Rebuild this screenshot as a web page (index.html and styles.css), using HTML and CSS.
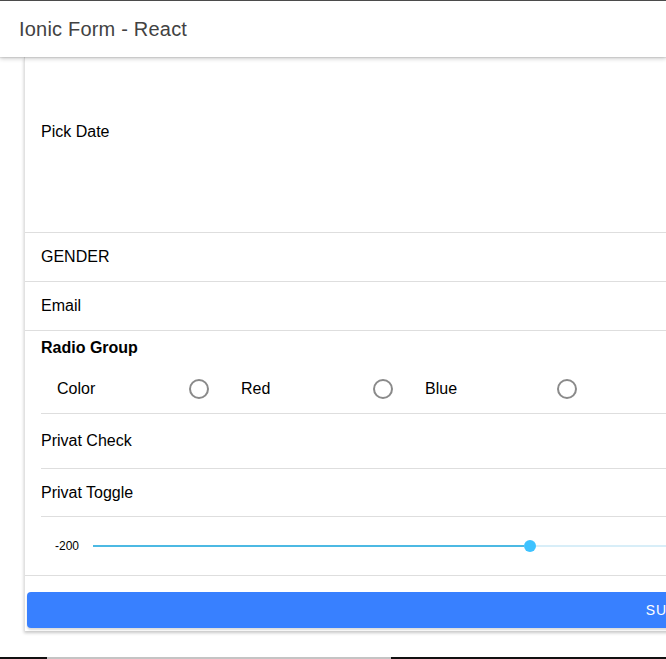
FILE: index.html
```html
<!DOCTYPE html>
<html>
<head>
<meta charset="utf-8">
<link rel="stylesheet" href="styles.css">
</head>
<body>
<div class="topline"></div>
<header class="toolbar"><div class="title">Ionic Form - React</div></header>
<main class="content">
  <div class="card">
    <div class="item item-date"><span>Pick Date</span></div>
    <div class="item item-line"><span>GENDER</span></div>
    <div class="item item-line"><span>Email</span></div>
    <div class="radio-head">Radio Group</div>
    <div class="radio-row">
      <div class="radio-item"><span>Color</span><span class="radio"></span></div>
      <div class="radio-item"><span>Red</span><span class="radio"></span></div>
      <div class="radio-item"><span>Blue</span><span class="radio"></span></div>
    </div>
    <div class="inset">
      <div class="item item-check"><span>Privat Check</span></div>
      <div class="item item-toggle"><span>Privat Toggle</span></div>
      <div class="item item-range">
        <span class="range-label">-200</span>
        <div class="range">
          <div class="range-active"></div>
          <div class="range-knob"></div>
          <div class="range-rest"></div>
        </div>
      </div>
    </div>
    <div class="card-sep"></div>
    <button class="submit">Submit</button>
  </div>
</main>
<div class="bottombar"><span class="seg dark a"></span><span class="seg light"></span><span class="seg dark b"></span></div>
</body>
</html>
```
FILE: styles.css
```css
html, body {
  margin: 0;
  padding: 0;
  background: #fff;
  overflow: hidden;
  width: 666px;
  height: 659px;
  font-family: "Liberation Sans", Arial, sans-serif;
  color: #000;
}
.topline {
  height: 1px;
  background: #4d4d4d;
}
.toolbar {
  height: 56px;
  display: flex;
  align-items: center;
  padding-left: 19px;
  background: #fff;
  box-shadow: 0 2px 4px rgba(0,0,0,0.18), 0 1px 1px rgba(0,0,0,0.08);
  position: relative;
  z-index: 2;
}
.title {
  font-size: 20px;
  color: #424242;
  letter-spacing: 0.2px;
}
.content {
  padding-left: 24px;
}
.card {
  width: 1300px;
  border-left: 1px solid #e2e2e2;
  box-shadow: 0 2px 3px rgba(0,0,0,0.22);
  padding-bottom: 3px;
  background: #fff;
}
.item {
  display: flex;
  align-items: center;
  padding-left: 16px;
  font-size: 16px;
  line-height: 18px;
  box-sizing: border-box;
}
.item-date {
  height: 176px;
  align-items: flex-start;
  padding-top: 66px;
  border-bottom: 1px solid #dedede;
}
.item-line {
  height: 49px;
  border-bottom: 1px solid #dedede;
}
.radio-head {
  font-weight: bold;
  font-size: 16px;
  padding: 8px 0 0 16px;
  height: 26px;
}
.radio-row {
  display: flex;
  margin-left: 16px;
  height: 48px;
  border-bottom: 1px solid #dedede;
  box-sizing: content-box;
  align-items: center;
}
.radio-item {
  width: 184px;
  box-sizing: border-box;
  display: flex;
  align-items: center;
  justify-content: space-between;
  padding: 0 16px;
  font-size: 16px;
}
.radio {
  width: 16px;
  height: 16px;
  border: 2px solid #8a8a8a;
  border-radius: 50%;
}
.inset {
  margin-left: 16px;
}
.inset .item {
  padding-left: 0;
  border-bottom: 1px solid #dedede;
}
.item-check {
  height: 55px;
}
.item-toggle {
  height: 48px;
}
.inset .item-range {
  height: 58px;
  border-bottom: none;
  padding-left: 14px;
}
.range-label {
  font-size: 12px;
  width: 38px;
}
.range {
  flex: 1;
  display: flex;
  align-items: center;
}
.range-active {
  width: 431px;
  height: 2px;
  background: #4cb9e3;
}
.range-knob {
  width: 12px;
  height: 12px;
  border-radius: 50%;
  background: #3dc2ff;
}
.range-rest {
  flex: 1;
  height: 2px;
  background: #d8eef8;
}
.card-sep {
  height: 1px;
  background: #dedede;
  margin-bottom: 16px;
}
.submit {
  display: block;
  margin: 0 2px;
  width: 1296px;
  height: 36px;
  border: none;
  border-radius: 4px;
  background: #3880ff;
  color: #fff;
  font-family: "Liberation Sans", Arial, sans-serif;
  font-size: 14px;
  letter-spacing: 0.9px;
  text-transform: uppercase;
  box-shadow: 0 2px 2px rgba(0,0,0,0.14);
}
.bottombar {
  display: flex;
  height: 2px;
  margin-top: 26px;
}
.seg {
  height: 2px;
}
.seg.dark.a { width: 47px; background: #111; }
.seg.light { width: 344px; background: #c4c4c4; }
.seg.dark.b { flex: 1; background: #111; }
```
